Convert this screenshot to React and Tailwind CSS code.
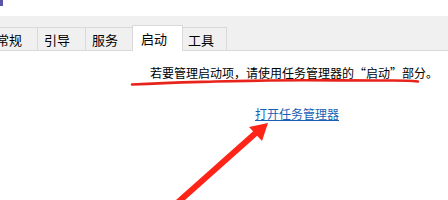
export default function App() {
  const tabs = [
    { label: "常规", w: "w-[48px]", pl: "pl-[6px]" },
    { label: "引导", w: "w-[48px]", pl: "pl-[6px]" },
    { label: "服务", w: "w-[47px]", pl: "pl-[6px]" },
  ];
  return (
    <div
      className="relative w-[448px] h-[200px] overflow-hidden bg-white text-black"
      style={{ fontFamily: '"Noto Sans CJK SC", "Noto Sans", sans-serif' }}
    >
      {/* top strip */}
      <div className="h-[16px] bg-white">
        <div className="w-[3px] h-[6px] bg-[#5a55a8]" />
      </div>

      {/* tab band */}
      <div className="h-[35px] bg-[#f0f0f0] border-b border-[#d9d9d9] flex items-end">
        <div className="flex items-end ml-[-11px]">
          {tabs.map((t) => (
            <div
              key={t.label}
              className={`${t.w} ${t.pl} h-[23px] border border-b-0 border-r-0 border-[#d9d9d9] bg-[#f0f0f0] text-[13px] leading-[23px]`}
            >
              {t.label}
            </div>
          ))}
          <div className="w-[51px] h-[26px] mb-[-1px] pl-[8px] border border-b-0 border-[#d9d9d9] bg-white text-[13px] leading-[25px]">
            启动
          </div>
          <div className="w-[44px] h-[23px] pl-[5px] border border-b-0 border-l-0 border-[#d9d9d9] bg-[#f0f0f0] text-[13px] leading-[24px]">
            工具
          </div>
        </div>
      </div>

      {/* content */}
      <div className="flex flex-col pt-[14px]">
        <p className="pl-[150px] text-[12px] leading-[16px] whitespace-nowrap">
          若要管理启动项，请使用任务管理器的“启动”部分。
        </p>
        <a
          href="#"
          className="ml-[255px] mt-[25px] text-[12px] leading-[16px] text-[#1a5fb4] underline whitespace-nowrap"
        >
          打开任务管理器
        </a>
      </div>

      {/* red annotation underline */}
      <svg className="absolute left-0 top-0 pointer-events-none" width="448" height="200">
        <path
          d="M132 84.5 C 170 82.5, 200 82, 215 81.5 C 235 81, 250 81, 268 80.5 C 300 80, 340 80.5, 380 80.5 C 395 80.5, 405 80, 418 81.5"
          stroke="#e8231b"
          strokeWidth="2.6"
          fill="none"
          strokeLinecap="round"
        />
        {/* arrow */}
        <line x1="176" y1="204" x2="258" y2="131" stroke="#ff2418" strokeWidth="6" />
        <polygon points="268,123 249,127 262,141" fill="#ff2418" />
      </svg>
    </div>
  );
}
